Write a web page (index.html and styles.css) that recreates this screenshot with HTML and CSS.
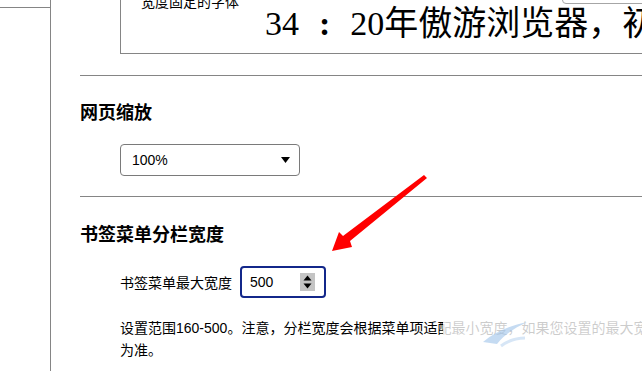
FILE: index.html
```html
<!DOCTYPE html>
<html lang="zh-CN">
<head>
<meta charset="utf-8">
<title>设置</title>
<link rel="stylesheet" href="styles.css">
</head>
<body>
<div class="page">
  <aside class="rail"><div class="rail-top"></div></aside>
  <main class="content">
    <div class="font-box">
      <div class="font-row">
        <span class="font-label">宽度固定的字体</span>
        <div class="font-select"></div>
      </div>
      <div class="font-sample">34<span class="colon">:</span>20年傲游浏览器，初次见面</div>
    </div>
    <hr class="divider">
    <section class="section">
      <h2 class="sec-title">网页缩放</h2>
      <div class="select">
        <span>100%</span>
        <svg class="caret" width="9" height="6" viewBox="0 0 9 6"><polygon points="0,0 9,0 4.5,6" fill="#000"/></svg>
      </div>
    </section>
    <hr class="divider divider-2">
    <section class="section">
      <h2 class="sec-title sec-title-2">书签菜单分栏宽度</h2>
      <div class="field">
        <span class="field-label">书签菜单最大宽度</span>
        <div class="number">
          <span>500</span>
          <span class="spinner">
            <svg width="15" height="18" viewBox="0 0 15 18"><polygon points="3.5,7.5 11.5,7.5 7.5,2.5" fill="#000"/><polygon points="3.5,10.5 11.5,10.5 7.5,15.5" fill="#000"/></svg>
          </span>
        </div>
      </div>
      <p class="desc">设置范围160-500。注意，分栏宽度会根据菜单项适配最小宽度，如果您设置的最大宽度小于最小宽度，将以最小宽度<br>为准。</p>
    </section>
  </main>
  <svg class="arrow" width="642" height="371" viewBox="0 0 642 371">
    <polygon points="424,175 427,178 350,241 352,247 332,251 339,232 343,236" fill="#ff0000"/>
  </svg>
  <div class="watermark">
    <svg width="199" height="30" viewBox="0 0 199 30">
      <path d="M40 24 C52 14 66 8 84 4 C72 10 62 16 54 26 Z" fill="#9ec3ea" opacity="0.6"/>
      <path d="M58 28 C66 22 74 20 82 20" stroke="#c6dcf2" stroke-width="3" fill="none" opacity="0.7"/>
    </svg>
  </div>
</div>
</body>
</html>
```

FILE: styles.css
```css
html, body {
  margin: 0;
  padding: 0;
  background: #fff;
}

body {
  font-family: "Liberation Sans", "Noto Sans CJK SC", sans-serif;
  font-size: 14px;
  color: #000;
}

.page {
  position: relative;
  display: flex;
  width: 642px;
  height: 371px;
  overflow: hidden;
  background: #fff;
}

.rail {
  flex: none;
  width: 50px;
  border-right: 1px solid #858585;
}

.rail-top {
  height: 7px;
  border-bottom: 1px solid #858585;
}

.content {
  flex: 1;
  min-width: 0;
  padding-left: 29px;
}

.font-box {
  box-sizing: border-box;
  width: 620px;
  margin: -30px 0 0 40px;
  border: 1px solid #858585;
  padding: 0 16px 17px 20px;
}

.font-row {
  display: flex;
  align-items: flex-start;
}

.font-label {
  margin-top: 21px;
  line-height: 20px;
  font-size: 14px;
}

.font-select {
  box-sizing: border-box;
  width: 161px;
  height: 33px;
  margin-left: auto;
  border: 1px solid #a6a6a6;
  border-radius: 4px;
  background: #fff;
}

.font-sample {
  margin-left: 124px;
  font-family: "Liberation Serif", "Noto Sans CJK SC", serif;
  font-size: 34px;
  line-height: 24px;
  white-space: nowrap;
}

.colon {
  margin: 0 20px 0 20px;
  font-weight: 700;
}

.divider {
  height: 0;
  margin: 21px 0 0;
  border: 0;
  border-top: 1px solid #858585;
}

.divider-2 {
  margin-top: 20px;
}

.sec-title {
  margin: 25px 0 0;
  font-size: 18px;
  line-height: 24px;
  font-weight: 700;
}

.sec-title-2 {
  margin-top: 26px;
}

.select {
  box-sizing: border-box;
  display: flex;
  align-items: center;
  justify-content: space-between;
  width: 180px;
  height: 32px;
  margin: 19px 0 0 40px;
  padding: 0 9px 0 11px;
  border: 1px solid #7a7a7a;
  border-radius: 4px;
  font-size: 14px;
}

.caret {
  display: block;
}

.field {
  display: flex;
  align-items: center;
  gap: 8px;
  height: 32px;
  margin: 19px 0 0 40px;
}

.field-label {
  font-size: 14px;
}

.number {
  box-sizing: border-box;
  display: flex;
  align-items: center;
  justify-content: space-between;
  width: 86px;
  height: 32px;
  padding: 0 9px 0 8px;
  border: 2px solid #13278a;
  border-radius: 4px;
  font-size: 14px;
}

.spinner {
  display: block;
  width: 15px;
  height: 18px;
  background: #c4c4c4;
}

.spinner svg {
  display: block;
}

.desc {
  margin: 19px 0 0 40px;
  font-size: 14px;
  line-height: 22px;
  white-space: nowrap;
}

.arrow {
  position: absolute;
  left: 0;
  top: 0;
  pointer-events: none;
}

.watermark {
  position: absolute;
  left: 443px;
  top: 318px;
  width: 199px;
  height: 30px;
  background: rgba(255, 255, 255, 0.8);
  pointer-events: none;
}

.watermark svg {
  display: block;
}
```
